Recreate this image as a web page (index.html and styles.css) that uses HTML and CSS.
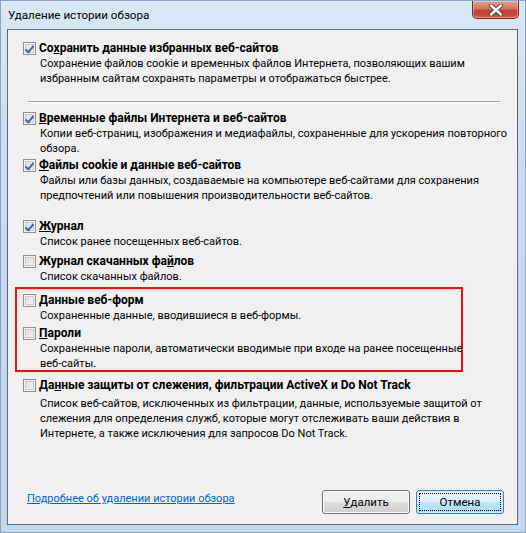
FILE: index.html
```html
<!DOCTYPE html>
<html lang="ru">
<head>
<meta charset="utf-8">
<title>Удаление истории обзора</title>
<link rel="stylesheet" href="styles.css">
</head>
<body>
<div class="window">
  <div class="titlebar">
    <span class="title">Удаление истории обзора</span>
    <div class="close" aria-label="Закрыть">
      <svg width="16" height="12" viewBox="0 0 16 12">
        <path d="M3 1.5 L13 10.5 M13 1.5 L3 10.5" stroke="#4a3a3a" stroke-width="4.2" stroke-linecap="round"/>
        <path d="M3 1.5 L13 10.5 M13 1.5 L3 10.5" stroke="#ffffff" stroke-width="2.4" stroke-linecap="round"/>
      </svg>
    </div>
  </div>
  <div class="client">
    <div class="item i1">
      <div class="label"><span class="cb checked"></span><span>Со<u>х</u>ранить данные избранных веб-сайтов</span></div>
      <div class="desc">Сохранение файлов cookie и временных файлов Интернета, позволяющих вашим<br>избранным сайтам сохранять параметры и отображаться быстрее.</div>
    </div>
    <div class="sep"></div>
    <div class="item i2">
      <div class="label"><span class="cb checked"></span><span><u>В</u>ременные файлы Интернета и веб-сайтов</span></div>
      <div class="desc">Копии веб-страниц, изображения и медиафайлы, сохраненные для ускорения повторного<br>обзора.</div>
    </div>
    <div class="item i3">
      <div class="label"><span class="cb checked"></span><span><u>Ф</u>айлы cookie и данные веб-сайтов</span></div>
      <div class="desc">Файлы или базы данных, создаваемые на компьютере веб-сайтами для сохранения<br>предпочтений или повышения производительности веб-сайтов.</div>
    </div>
    <div class="item i4">
      <div class="label"><span class="cb checked"></span><span><u>Ж</u>урнал</span></div>
      <div class="desc">Список ранее посещенных веб-сайтов.</div>
    </div>
    <div class="item i5">
      <div class="label"><span class="cb"></span><span>Журнал скачанных фа<u>й</u>лов</span></div>
      <div class="desc">Список скачанных файлов.</div>
    </div>
    <div class="highlight">
      <div class="item i6">
        <div class="label"><span class="cb"></span><span><u>Д</u>анные веб-форм</span></div>
        <div class="desc">Сохраненные данные, вводившиеся в веб-формы.</div>
      </div>
      <div class="item i7">
        <div class="label"><span class="cb"></span><span><u>П</u>ароли</span></div>
        <div class="desc">Сохраненные пароли, автоматически вводимые при входе на ранее посещенные<br>веб-сайты.</div>
      </div>
    </div>
    <div class="item i8">
      <div class="label"><span class="cb"></span><span>Да<u>н</u>ные защиты от слежения, фильтрации ActiveX и Do Not Track</span></div>
      <div class="desc">Список веб-сайтов, исключенных из фильтрации, данные, используемые защитой от<br>слежения для определения служб, которые могут отслеживать ваши действия в<br>Интернете, а также исключения для запросов Do Not Track.</div>
    </div>
    <div class="footer">
      <a class="link" href="#">Подробнее об удалении истории обзора</a>
      <div class="buttons">
        <button class="btn"><u>У</u>далить</button>
        <button class="btn default"><span class="focus">Отмена</span></button>
      </div>
    </div>
  </div>
</div>
</body>
</html>
```
FILE: styles.css
```css
html, body {
  margin: 0;
  padding: 0;
}
body {
  width: 526px;
  height: 533px;
  overflow: hidden;
  font-family: Roboto, "Liberation Sans", sans-serif;
  font-size: 11px;
  color: #000;
}
.window {
  width: 526px;
  height: 533px;
  box-sizing: border-box;
  background: linear-gradient(#d9e7f6, #c6daf0 40%, #c4d8ef);
  border: 1px solid #8aa4c2;
  display: flex;
  flex-direction: column;
  padding: 0 7px 7px 6px;
}
.titlebar {
  height: 28px;
  display: flex;
  align-items: flex-start;
  justify-content: space-between;
  flex-shrink: 0;
}
.title {
  padding: 7px 0 0 1px;
  font-size: 11.6px;
  line-height: 14px;
  color: #000;
}
.close {
  width: 47px;
  height: 18px;
  margin-right: -1px;
  box-sizing: border-box;
  border: 1px solid #6b2b24;
  border-top: none;
  border-radius: 0 0 5px 5px;
  background: linear-gradient(#e7a293, #d7705e 45%, #c5422e 55%, #c24733 80%, #d76a52);
  box-shadow: inset 0 0 0 1px rgba(255,255,255,0.35);
  display: flex;
  align-items: center;
  justify-content: center;
}
.close svg { display: block; }
.client {
  flex: 1;
  background: #f0f0f0;
  border: 1px solid #5a6b80;
  display: flex;
  flex-direction: column;
  padding: 0 0 0 15px;
}
.item {
  display: flex;
  flex-direction: column;
}
.label {
  display: flex;
  align-items: center;
  gap: 3px;
  font-weight: bold;
  font-size: 12px;
  line-height: 16px;
  height: 16px;
  white-space: nowrap;
}
.label u, .btn u { text-decoration: underline; }
.desc {
  padding-left: 17px;
  line-height: 15px;
  color: #000;
  white-space: nowrap;
}
.cb {
  width: 13px;
  height: 13px;
  box-sizing: border-box;
  border: 1px solid #8f8f8f;
  background: linear-gradient(135deg, #dcdcdc, #f7f7f7);
  box-shadow: inset 0 0 0 1px #f4f4f4, inset 0 0 0 2px #c9c9c9;
  flex-shrink: 0;
  position: relative;
}
.cb.checked::after {
  content: "";
  position: absolute;
  left: 3px;
  top: 1px;
  width: 3px;
  height: 7px;
  border: solid #4c61a8;
  border-width: 0 2px 2px 0;
  transform: rotate(40deg);
}
.i1 { margin-top: 10px; }
.sep {
  margin: 15px 17px 0 5px;
  height: 1px;
  background: #a0a0a0;
  border-bottom: 1px solid #ffffff;
}
.i2 { margin-top: 7px; }
.i3 { margin-top: 1px; }
.i4 { margin-top: 15px; }
.i5 { margin-top: 4px; }
.highlight {
  margin: 3px 54px 0 -8px;
  border: 2px solid #ee1111;
  padding: 3px 0 0 6px;
  display: flex;
  flex-direction: column;
}
.i7 { margin-top: 2px; }
.i7 .desc { margin-bottom: -1px; }
.i8 { margin-top: 5px; }
.i8 .desc { margin-top: 3px; }
.footer {
  margin-top: auto;
  display: flex;
  align-items: center;
  justify-content: space-between;
  padding: 0 13px 10px 4px;
}
.link {
  color: #0066cc;
  text-decoration: underline;
  font-size: 11px;
  margin-bottom: 7px;
}
.buttons {
  display: flex;
  gap: 6px;
}
.btn {
  width: 88px;
  height: 24px;
  box-sizing: border-box;
  border: 1px solid #707070;
  border-radius: 3px;
  background: linear-gradient(#f2f2f2, #ebebeb 50%, #dddddd 51%, #cfcfcf);
  box-shadow: inset 0 0 0 1px #fcfcfc;
  font-family: Roboto, "Liberation Sans", sans-serif;
  font-size: 11.5px;
  color: #000;
  padding: 0;
  display: flex;
  align-items: center;
  justify-content: center;
}
.btn.default {
  border-color: #3c7fb1;
  background: linear-gradient(#eaf6fd, #d9f0fc 50%, #bee6fd 51%, #a7d9f5);
  box-shadow: inset 0 0 0 1px #cfeafb;
  padding: 2px;
}
.btn .focus {
  flex: 1;
  align-self: stretch;
  display: flex;
  align-items: center;
  justify-content: center;
  border: 1px dotted #000;
}
```
